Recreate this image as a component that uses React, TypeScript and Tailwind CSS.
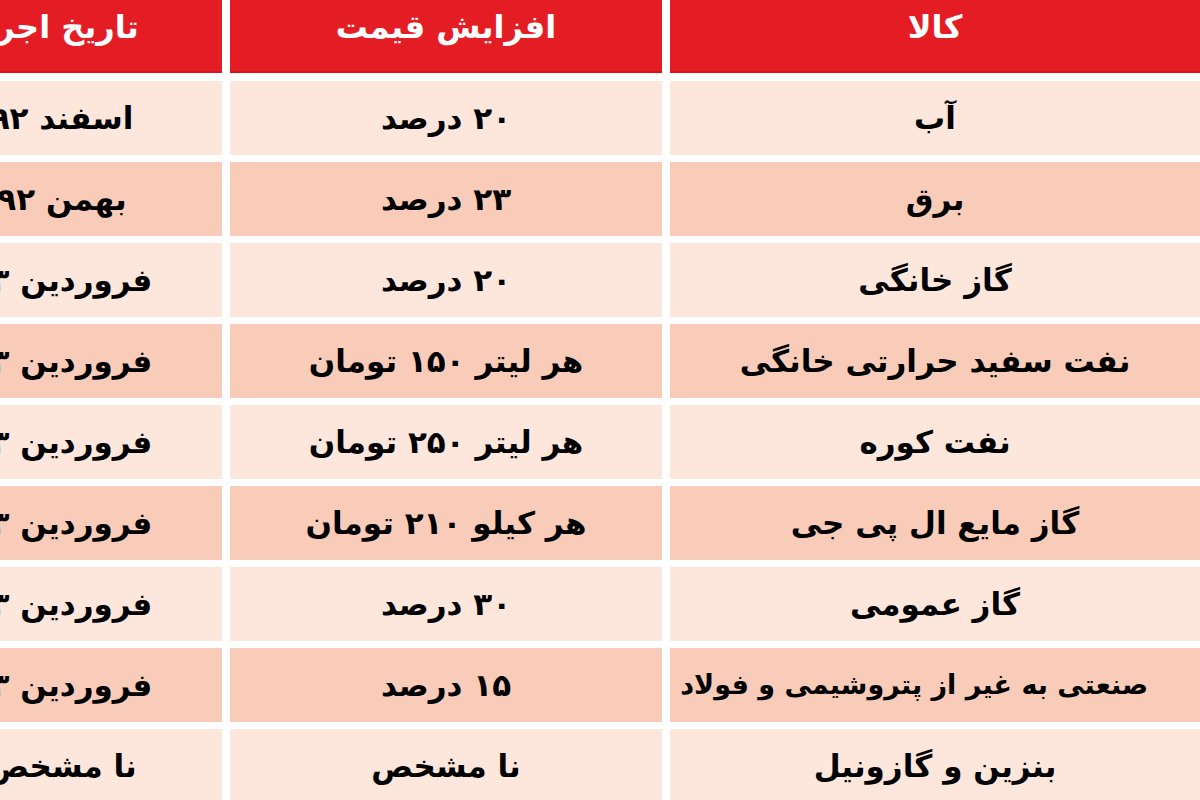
const rows: [string, string, string][] = [
  ["آب", "۲۰ درصد", "اسفند ۹۲"],
  ["برق", "۲۳ درصد", "بهمن ۹۲"],
  ["گاز خانگی", "۲۰ درصد", "فروردین ۹۳"],
  ["نفت سفید حرارتی خانگی", "هر لیتر ۱۵۰ تومان", "فروردین ۹۳"],
  ["نفت کوره", "هر لیتر ۲۵۰ تومان", "فروردین ۹۳"],
  ["گاز مایع ال پی جی", "هر کیلو ۲۱۰ تومان", "فروردین ۹۳"],
  ["گاز عمومی", "۳۰ درصد", "فروردین ۹۳"],
  ["صنعتی به غیر از پتروشیمی و فولاد", "۱۵ درصد", "فروردین ۹۳"],
  ["بنزین و گازونیل", "نا مشخص", "نا مشخص"],
];

const headers = ["کالا", "افزایش قیمت", "تاریخ اجرا"];

export default function App() {
  return (
    <div
      dir="rtl"
      className="w-[1200px] h-[800px] overflow-hidden bg-white"
      style={{ fontFamily: '"DejaVu Sans", sans-serif' }}
    >
      <div className="grid grid-cols-[530px_432px_320px] auto-rows-[74px] gap-x-2 gap-y-[7px] w-max">
        {headers.map((h) => (
          <div
            key={h}
            className="h-[73px] -mb-[1px] bg-[#e41d25] border-b-2 border-[#d5141c] flex justify-center pt-[6px] text-white font-bold text-[32px] leading-[42px] whitespace-nowrap"
          >
            {h}
          </div>
        ))}
        {rows.map((r, i) =>
          r.map((c, j) => (
            <div
              key={`${i}-${j}`}
              className={`flex items-center overflow-hidden whitespace-nowrap text-black font-bold ${
                i === 7 && j === 0 ? "justify-start pr-[52px] text-[27px]" : "justify-center text-[31px]"
              } ${i % 2 === 0 ? "bg-[#fde7dd]" : "bg-[#f9ccb9]"}`}
            >
              {c}
            </div>
          ))
        )}
      </div>
    </div>
  );
}
